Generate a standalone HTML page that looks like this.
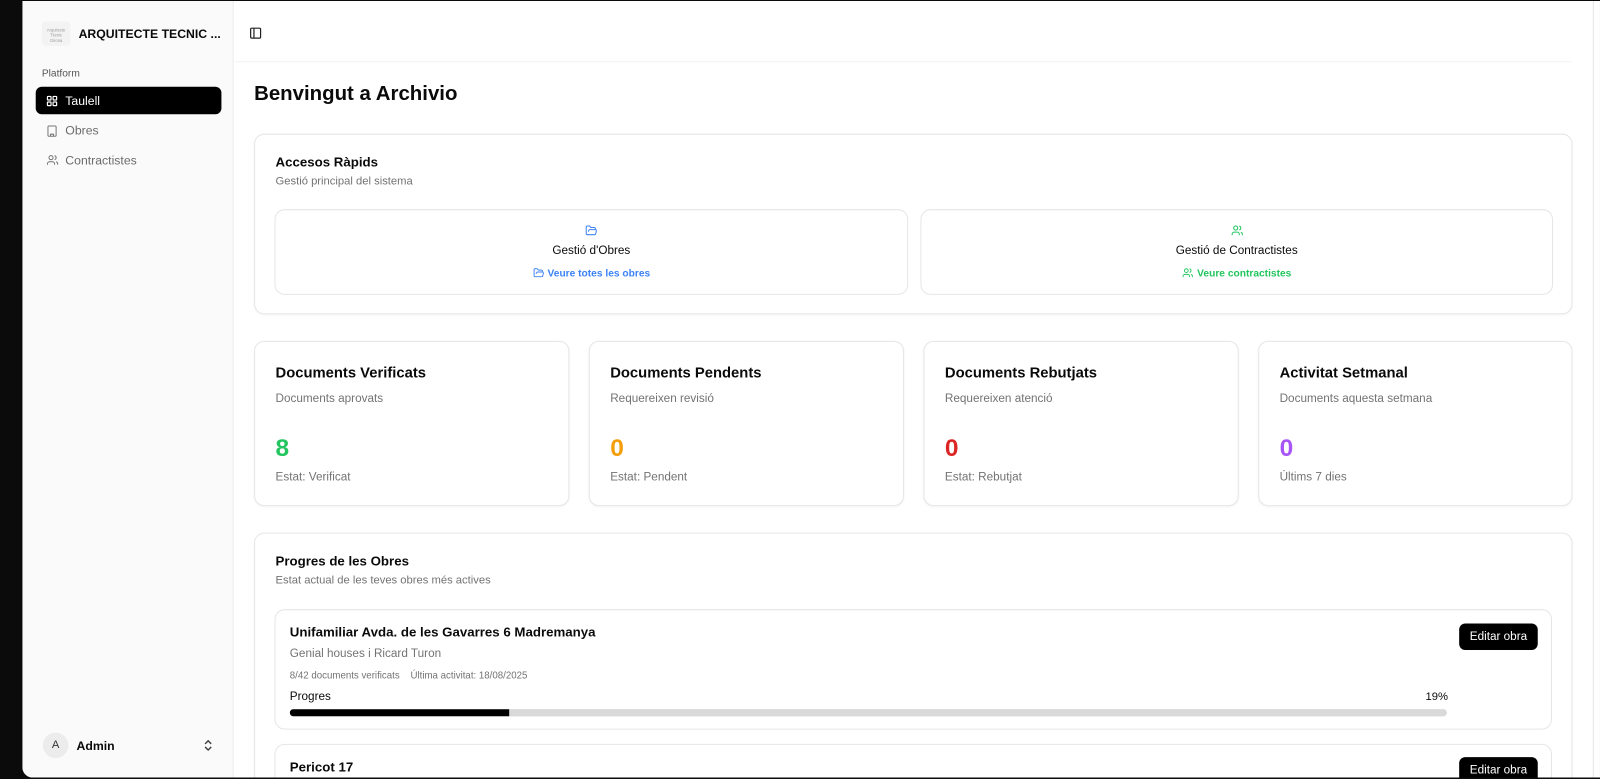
<!DOCTYPE html>
<html><head><meta charset="utf-8"><style>
*{box-sizing:border-box;margin:0;padding:0}
html,body{width:1600px;height:779px;overflow:hidden}
body{background:#0b0b0b;font-family:"Liberation Sans",sans-serif;color:#0a0a0a;position:relative}
.wrap{position:absolute;left:0;top:0;width:1568px;height:763px;transform:scale(1.0204);transform-origin:0 0}
.win{position:absolute;left:22px;top:1px;width:1546px;height:761px;background:#fff;border-bottom-left-radius:10px;overflow:hidden}
.side{position:absolute;left:0;top:0;width:207px;height:100%;background:#fafafa;border-right:1px solid #ececec}
.a{position:absolute}
.card{position:absolute;background:#fff;border:1px solid #e6e6e6;border-radius:10px;box-shadow:0 1px 2px rgba(0,0,0,.04)}
.t{font-size:14.5px;font-weight:bold}
.s{font-size:11.5px;color:#737373}
svg{display:block}
</style></head><body>
<div class="wrap">
<div class="win">
 <div class="side">
  <div class="a" style="left:19px;top:20px;width:28px;height:24px;background:#f3f3f3;border-radius:4px;font-size:4px;color:#999;text-align:center;line-height:5px;padding-top:6px">Arquitecte<br>Tècnic<br>Girona</div>
  <div class="a" style="left:55px;top:25px;font-size:12px;font-weight:bold">ARQUITECTE TECNIC ...</div>
  <div class="a" style="left:19px;top:66px;font-size:10px;color:#555">Platform</div>
  <div class="a" style="left:13px;top:84px;width:182px;height:27px;background:#000;border-radius:6px"></div>
  <svg class="a" style="left:23px;top:92px" width="12" height="12" viewBox="0 0 24 24" fill="none" stroke="#fff" stroke-width="2.4"><rect x="3" y="3" width="7" height="7" rx="1"/><rect x="14" y="3" width="7" height="7" rx="1"/><rect x="3" y="14" width="7" height="7" rx="1"/><rect x="14" y="14" width="7" height="7" rx="1"/></svg>
  <div class="a" style="left:42px;top:91px;font-size:12px;color:#fff">Taulell</div>
  <svg class="a" style="left:23px;top:121px" width="12" height="13" viewBox="0 0 24 24" fill="none" stroke="#777" stroke-width="2"><rect x="4" y="2" width="16" height="20" rx="2"/><path d="M9 22v-4h6v4M8 6h.01M12 6h.01M16 6h.01M8 10h.01M12 10h.01M16 10h.01"/></svg>
  <div class="a" style="left:42px;top:120px;font-size:12px;color:#6b6b6b">Obres</div>
  <svg class="a" style="left:23px;top:150px" width="13" height="12" viewBox="0 0 24 24" fill="none" stroke="#777" stroke-width="2"><path d="M16 21v-2a4 4 0 0 0-4-4H6a4 4 0 0 0-4 4v2"/><circle cx="9" cy="7" r="4"/><path d="M22 21v-2a4 4 0 0 0-3-3.87M16 3.13a4 4 0 0 1 0 7.75"/></svg>
  <div class="a" style="left:42px;top:149px;font-size:12px;color:#6b6b6b">Contractistes</div>
  <div class="a" style="left:20px;top:717px;width:25px;height:25px;border-radius:50%;background:#ececec;font-size:11px;text-align:center;line-height:25px;color:#333">A</div>
  <div class="a" style="left:53px;top:723px;font-size:12px;font-weight:bold">Admin</div>
  <svg class="a" style="left:177px;top:723px" width="10" height="13" viewBox="0 0 10 13" fill="none" stroke="#444" stroke-width="1.4"><path d="M2 5l3-3 3 3M2 8l3 3 3-3"/></svg>
 </div>
 <svg class="a" style="left:222px;top:25px" width="13" height="13" viewBox="0 0 24 24" fill="none" stroke="#222" stroke-width="2.2"><rect x="3" y="3" width="18" height="18" rx="2"/><path d="M9 3v18"/></svg>
 <div class="a" style="left:208px;top:59px;width:1310px;height:1px;background:#f0f0f0"></div>
 <div class="a" style="left:1539px;top:0;width:1px;height:100%;background:#e6e6e6"></div>
 <div class="a" style="left:227px;top:80px;font-size:20px;font-weight:bold">Benvingut a Archivio</div>

 <div class="card" style="left:227px;top:130px;width:1292px;height:177px">
  <div class="a t" style="left:20px;top:19px;font-size:13px">Accesos Ràpids</div>
  <div class="a s" style="left:20px;top:40px;font-size:11px">Gestió principal del sistema</div>
  <div class="card" style="left:19px;top:73px;width:621px;height:84px;box-shadow:none">
   <svg class="a" style="left:303px;top:14px" width="13" height="12" viewBox="0 0 24 24" fill="none" stroke="#3b82f6" stroke-width="2"><path d="M6 14l1.5-2.9A2 2 0 0 1 9.2 10H20a2 2 0 0 1 1.9 2.5l-1.5 6A2 2 0 0 1 18.5 20H4a2 2 0 0 1-2-2V5a2 2 0 0 1 2-2h3.9a2 2 0 0 1 1.7.9l.8 1.2a2 2 0 0 0 1.7.9H18a2 2 0 0 1 2 2v2"/></svg>
   <div class="a" style="left:0;width:100%;top:34px;text-align:center;font-size:11.5px">Gestió d'Obres</div>
   <div class="a" style="left:0;width:100%;top:56px;text-align:center;font-size:10px;color:#3b82f6;font-weight:bold">
    <svg style="display:inline-block;vertical-align:-2px" width="12" height="11" viewBox="0 0 24 24" fill="none" stroke="#3b82f6" stroke-width="2"><path d="M6 14l1.5-2.9A2 2 0 0 1 9.2 10H20a2 2 0 0 1 1.9 2.5l-1.5 6A2 2 0 0 1 18.5 20H4a2 2 0 0 1-2-2V5a2 2 0 0 1 2-2h3.9a2 2 0 0 1 1.7.9l.8 1.2a2 2 0 0 0 1.7.9H18a2 2 0 0 1 2 2v2"/></svg> Veure totes les obres</div>
  </div>
  <div class="card" style="left:652px;top:73px;width:620px;height:84px;box-shadow:none">
   <svg class="a" style="left:303px;top:14px" width="13" height="12" viewBox="0 0 24 24" fill="none" stroke="#22c55e" stroke-width="2"><path d="M16 21v-2a4 4 0 0 0-4-4H6a4 4 0 0 0-4 4v2"/><circle cx="9" cy="7" r="4"/><path d="M22 21v-2a4 4 0 0 0-3-3.87M16 3.13a4 4 0 0 1 0 7.75"/></svg>
   <div class="a" style="left:0;width:100%;top:34px;text-align:center;font-size:11.5px">Gestió de Contractistes</div>
   <div class="a" style="left:0;width:100%;top:56px;text-align:center;font-size:10px;color:#22c55e;font-weight:bold">
    <svg style="display:inline-block;vertical-align:-2px" width="12" height="11" viewBox="0 0 24 24" fill="none" stroke="#22c55e" stroke-width="2"><path d="M16 21v-2a4 4 0 0 0-4-4H6a4 4 0 0 0-4 4v2"/><circle cx="9" cy="7" r="4"/><path d="M22 21v-2a4 4 0 0 0-3-3.87M16 3.13a4 4 0 0 1 0 7.75"/></svg> Veure contractistes</div>
  </div>
 </div>

 <div class="card" style="left:227px;top:333px;width:309px;height:162px">
  <div class="a t" style="left:20px;top:23px">Documents Verificats</div>
  <div class="a s" style="left:20px;top:50px">Documents aprovats</div>
  <div class="a" style="left:20px;top:91px;font-size:24px;font-weight:bold;color:#22c55e">8</div>
  <div class="a s" style="left:20px;top:127px">Estat: Verificat</div>
 </div>
 <div class="card" style="left:555px;top:333px;width:309px;height:162px">
  <div class="a t" style="left:20px;top:23px">Documents Pendents</div>
  <div class="a s" style="left:20px;top:50px">Requereixen revisió</div>
  <div class="a" style="left:20px;top:91px;font-size:24px;font-weight:bold;color:#f59e0b">0</div>
  <div class="a s" style="left:20px;top:127px">Estat: Pendent</div>
 </div>
 <div class="card" style="left:883px;top:333px;width:309px;height:162px">
  <div class="a t" style="left:20px;top:23px">Documents Rebutjats</div>
  <div class="a s" style="left:20px;top:50px">Requereixen atenció</div>
  <div class="a" style="left:20px;top:91px;font-size:24px;font-weight:bold;color:#dc2626">0</div>
  <div class="a s" style="left:20px;top:127px">Estat: Rebutjat</div>
 </div>
 <div class="card" style="left:1211px;top:333px;width:308px;height:162px">
  <div class="a t" style="left:20px;top:23px">Activitat Setmanal</div>
  <div class="a s" style="left:20px;top:50px">Documents aquesta setmana</div>
  <div class="a" style="left:20px;top:91px;font-size:24px;font-weight:bold;color:#a855f7">0</div>
  <div class="a s" style="left:20px;top:127px">Últims 7 dies</div>
 </div>

 <div class="card" style="left:227px;top:521px;width:1292px;height:260px">
  <div class="a t" style="left:20px;top:19px;font-size:13px">Progres de les Obres</div>
  <div class="a s" style="left:20px;top:40px;font-size:11px">Estat actual de les teves obres més actives</div>
  <div class="card" style="left:19px;top:74px;width:1252px;height:118px;box-shadow:none">
   <div class="a" style="left:14px;top:14px;font-size:13px;font-weight:bold">Unifamiliar Avda. de les Gavarres 6 Madremanya</div>
   <div class="a s" style="left:14px;top:37px">Genial houses i Ricard Turon</div>
   <div class="a s" style="left:14px;top:59px;font-size:9.5px">8/42 documents verificats &nbsp;&nbsp;&nbsp;Última activitat: 18/08/2025</div>
   <div class="a" style="left:14px;top:79px;font-size:11.5px">Progres</div>
   <div class="a" style="left:1127px;top:79px;font-size:11px">19%</div>
   <div class="a" style="left:14px;top:97px;width:1134px;height:7px;border-radius:4px;background:#d9d9d9;overflow:hidden"><div style="width:19%;height:100%;background:#000"></div></div>
   <div class="a" style="left:1160px;top:13px;width:77px;height:26px;background:#000;border-radius:6px;color:#fff;font-size:11.5px;text-align:center;line-height:26px">Editar obra</div>
  </div>
  <div class="card" style="left:19px;top:206px;width:1252px;height:60px;box-shadow:none">
   <div class="a" style="left:14px;top:14px;font-size:13px;font-weight:bold">Pericot 17</div>
   <div class="a" style="left:1160px;top:12px;width:77px;height:26px;background:#000;border-radius:6px;color:#fff;font-size:11.5px;text-align:center;line-height:26px">Editar obra</div>
  </div>
 </div>
</div>
</div>
</body></html>
